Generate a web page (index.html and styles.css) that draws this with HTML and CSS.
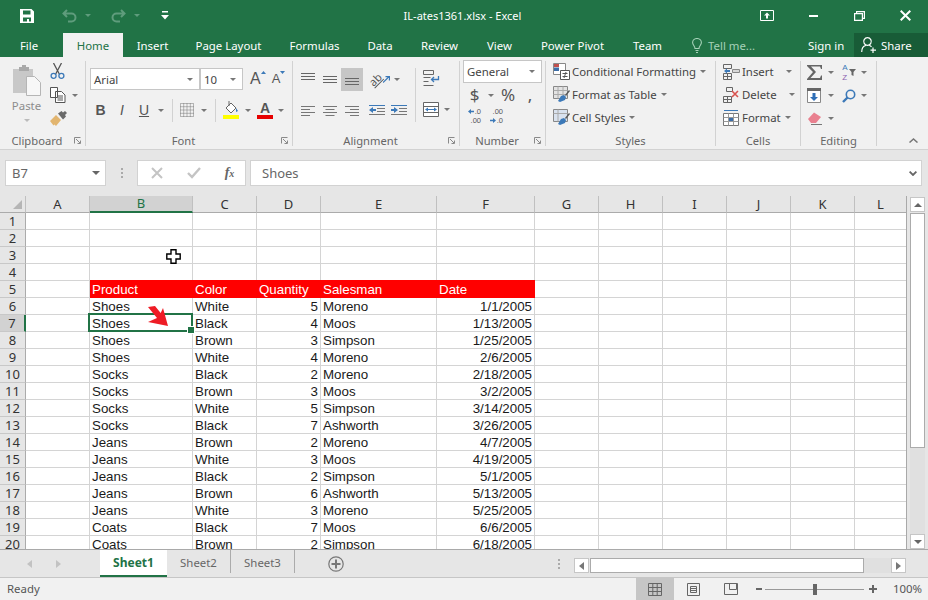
FILE: index.html
```html
<!DOCTYPE html>
<html lang="en">
  <head>
    <meta charset="UTF-8" />
    <title>IL-ates1361.xlsx - Excel</title>
    <link rel="stylesheet" href="styles.css">
  </head>
  <body>
    <!-- Title bar -->
    <div class="titlebar">
      <div class="qat">
        <svg class="q-save" width="14" height="14" viewBox="0 0 14 14"><path fill="#fff" fill-rule="evenodd" d="M0 0h11.5L14 2.500V14H0zM3 1.500V5.500h7.500V1.500zM3 8.500V12.500h8V8.500zM7 10h2v2.500H7z"/></svg>
        <svg class="q-undo" width="15" height="14" viewBox="0 0 15 14"><path fill="none" stroke="#5f9c7c" stroke-width="2" d="M5 1 1.500 4.500 5 8M2 4.500h7.500a4 4 0 0 1 0 8H6"/></svg>
        <i class="caret faded q-c1"></i>
        <svg class="q-redo" width="15" height="14" viewBox="0 0 15 14"><path fill="none" stroke="#5f9c7c" stroke-width="2" d="M10 1l3.500 3.500L10 8M13 4.500H5.500a4 4 0 0 0 0 8H9"/></svg>
        <i class="caret faded q-c2"></i>
        <svg class="q-more" width="8" height="9" viewBox="0 0 8 9"><path fill="#fff" d="M1 0h6v1.500H1zM0 4h8L4 8.500z"/></svg>
      </div>
      <div class="doc-title">IL-ates1361.xlsx - Excel</div>
      <div class="win-btns">
        <svg width="14" height="11" viewBox="0 0 14 11"><path fill="none" stroke="#fff" d="M.5.500h13v10H.5z"/><path fill="#fff" d="M7 2.500 10 5.500H8V8.500H6V5.500H4z"/></svg>
        <svg width="9" height="2" viewBox="0 0 9 2"><path fill="#fff" d="M0 0h9v2H0z"/></svg>
        <svg width="11" height="10" viewBox="0 0 11 10"><path fill="none" stroke="#fff" stroke-width="1.200" d="M.6 2.600h7.800v6.800H.6zM2.600 2.600V.6h7.800v6.800H8.400"/></svg>
        <svg width="11" height="11" viewBox="0 0 11 11"><path stroke="#fff" stroke-width="2" d="M.7.700l9.600 9.600M10.300.700.700 10.300"/></svg>
      </div>
    </div>

    <!-- Tabs -->
    <div class="tabs">
      <div class="tab-list">
        <div>File</div>
        <div class="tab-active">Home</div>
        <div>Insert</div>
        <div>Page Layout</div>
        <div>Formulas</div>
        <div>Data</div>
        <div>Review</div>
        <div>View</div>
        <div>Power Pivot</div>
        <div>Team</div>
      </div>
      <div class="tell-me">
        <svg width="10" height="15" viewBox="0 0 10 15"><path fill="none" stroke="#a6d1b8" stroke-width="1.100" d="M3 10.500C3 8 .6 7 .6 4.600a4.400 4.100 0 0 1 8.800 0C9.400 7 7 8 7 10.500zM3.500 12.500h3M4 14.500h2"/></svg>
        <span>Tell me...</span>
      </div>
      <div class="sign-in">Sign in</div>
      <div class="share">
        <svg width="16" height="16" viewBox="0 0 16 16"><path fill="none" stroke="#fff" stroke-width="1.200" d="M6.500.7a3.800 3.800 0 1 1-.01 0zM.7 15c0-3.500 2-6 4-6.500M8.500 8.500c.8.200 1.500.7 2 1.300M12 10.500V16M9.500 13.200h5.500"/></svg>
        <span>Share</span>
      </div>
    </div>

    <!-- Ribbon -->
    <div class="ribbon">
      <div class="group g-clipboard">
        <div class="group-body clip-body">
          <div class="paste">
            <svg width="29" height="31" viewBox="0 0 29 31"><path fill="#c8c8c8" d="M1 4h20v24H1z"/><path fill="#a9a9a9" d="M7 2h3V0h4v2h3v4H7z"/><path fill="#f7f7f7" stroke="#b5b5b5" d="M14.500 11.500h8l6 6v13h-14z"/></svg>
            <span>Paste</span>
            <i class="caret light"></i>
          </div>
          <div class="clip-tools">
            <svg width="15" height="16" viewBox="0 0 15 16"><path fill="none" stroke="#555" stroke-width="1.300" d="M3.500 0l5.800 11M11.500 0 5.700 11"/><circle cx="3.600" cy="12.800" r="2.500" fill="none" stroke="#3c79b8" stroke-width="1.300"/><circle cx="11.400" cy="12.800" r="2.500" fill="none" stroke="#3c79b8" stroke-width="1.300"/></svg>
            <div class="clip-copy">
              <svg width="16" height="16" viewBox="0 0 16 16"><path fill="#fff" stroke="#555" d="M.5.500h7v10h-7zM5.500 4.500h6l3.500 3.500v7.500H5.500z"/><path stroke="#555" d="M7.500 9h5.500M7.500 11h5.500M7.500 13h5.500"/></svg>
              <i class="caret"></i>
            </div>
            <svg width="17" height="15" viewBox="0 0 17 15"><path fill="#e2b56f" d="M0 10l6-6 5 5-5 6-1.500-1.500-1 1z"/><path fill="#6a6a6a" d="M8 2.500 11.500 0l1.500 1.500L15 0l2 2-2 2 1 1.500-3 3z"/></svg>
          </div>
        </div>
        <div class="group-label lab-launch"><span>Clipboard</span><svg class="launcher" width="7" height="7" viewBox="0 0 7 7"><path fill="none" stroke="#8a8a8a" d="M.5 6.500v-6h6M2 2l4 4M3.500 6.500h3v-3"/></svg></div>
      </div>

      <div class="group g-font">
        <div class="group-body font-body">
          <div class="font-row-1">
            <div class="select font-name"><span>Arial</span><i class="caret"></i></div>
            <div class="select font-size"><span>10</span><i class="caret"></i></div>
            <div class="size-btn grow-a"><span>A</span><svg width="5" height="3" viewBox="0 0 5 3"><path fill="#3c79b8" d="M0 3 2.500 0 5 3z"/></svg></div>
            <div class="size-btn shrink-a"><span>A</span><svg width="5" height="3" viewBox="0 0 5 3"><path fill="#3c79b8" d="M0 0h5L2.500 3z"/></svg></div>
          </div>
          <div class="font-row-2">
            <b class="fmt">B</b>
            <i class="fmt">I</i>
            <u class="fmt">U</u>
            <i class="caret"></i>
            <span class="mini-sep"></span>
            <svg width="14" height="14" viewBox="0 0 14 14"><path fill="none" stroke="#777" stroke-dasharray="1 1" d="M.5.500h13v13H.5zM7 .5v13M.5 7h13M3.700.5v13M10.300.5v13M.5 3.700h13M.5 10.300h13"/></svg>
            <i class="caret"></i>
            <span class="mini-sep"></span>
            <svg width="16" height="18" viewBox="0 0 16 18"><path fill="#fff" stroke="#666" d="M3 7l5-5 5 5-5 5z"/><path stroke="#666" d="M6 0v5"/><path fill="#3c79b8" d="M13 7l2 3-2 1z"/><path fill="#ffff00" d="M0 14h16v4H0z"/></svg>
            <i class="caret"></i>
            <div class="color-btn"><span>A</span></div>
            <i class="caret"></i>
          </div>
        </div>
        <div class="group-label lab-launch"><span>Font</span><svg class="launcher" width="7" height="7" viewBox="0 0 7 7"><path fill="none" stroke="#8a8a8a" d="M.5 6.500v-6h6M2 2l4 4M3.500 6.500h3v-3"/></svg></div>
      </div>

      <div class="group g-align">
        <div class="group-body align-body">
          <div class="align-main">
            <div class="align-cell"><svg width="14" height="8" viewBox="0 0 14 8"><path stroke="#666" d="M0 .5h14M0 3.500h14M0 6.500h14"/></svg></div>
            <div class="align-cell"><svg width="14" height="8" viewBox="0 0 14 8"><path stroke="#666" d="M0 .5h14M0 3.500h14M0 6.500h14"/></svg></div>
            <div class="align-cell align-on"><svg width="14" height="8" viewBox="0 0 14 8"><path stroke="#666" d="M0 .5h14M0 3.500h14M0 6.500h14"/></svg></div>
            <div class="align-wide">
              <span class="orient">ab</span>
              <svg class="orient-arrow" width="7" height="7" viewBox="0 0 7 7"><path fill="none" stroke="#3c79b8" stroke-width="1.200" d="M0 6.500 6 .8M2.500.6h3.900v3.900"/></svg>
              <i class="caret"></i>
            </div>
            <div class="align-cell"><svg width="14" height="10" viewBox="0 0 14 10"><path stroke="#777" d="M0 .5h14M0 3.500h9M0 6.500h14M0 9.500h9"/></svg></div>
            <div class="align-cell"><svg width="14" height="10" viewBox="0 0 14 10"><path stroke="#777" d="M0 .5h14M2.500 3.500h9M0 6.500h14M2.500 9.500h9"/></svg></div>
            <div class="align-cell"><svg width="14" height="10" viewBox="0 0 14 10"><path stroke="#777" d="M0 .5h14M5 3.500h9M0 6.500h14M5 9.500h9"/></svg></div>
            <div class="align-wide indents">
              <svg width="16" height="11" viewBox="0 0 16 11"><path stroke="#777" d="M8 3.500h8M8 6.500h8M0 9.500h16"/><path stroke="#3c79b8" d="M0 .5h16"/><path fill="#3c79b8" d="M0 5l4-3v2h3v2H4v2z"/></svg>
              <svg width="16" height="11" viewBox="0 0 16 11"><path stroke="#777" d="M8 3.500h8M8 6.500h8M0 9.500h16"/><path stroke="#3c79b8" d="M0 .5h16"/><path fill="#3c79b8" d="M7 5 3 2v2H0v2h3v2z"/></svg>
            </div>
          </div>
          <div class="side-sep"></div>
          <div class="align-side">
            <svg width="17" height="16" viewBox="0 0 17 16"><path fill="none" stroke="#666" d="M.5.500h10v4H.5zM.5 7.500h7M.5 11.500h5M.5 15.500h10"/><path fill="none" stroke="#3c79b8" stroke-width="1.300" d="M15.500 6v3.500h-7M11 7l-2.500 2.500L11 12"/></svg>
            <div class="merge">
              <svg width="16" height="15" viewBox="0 0 16 15"><path fill="#fff" stroke="#666" d="M.5.500h15v14H.5z"/><path stroke="#666" d="M.5 4.500h15M.5 10.500h15"/><path stroke="#3c79b8" d="M3 7.500h10"/><path fill="#3c79b8" d="M2 7.500 5 5.500v4zM14 7.500 11 5.500v4z"/></svg>
              <i class="caret"></i>
            </div>
          </div>
        </div>
        <div class="group-label lab-launch"><span>Alignment</span><svg class="launcher" width="7" height="7" viewBox="0 0 7 7"><path fill="none" stroke="#8a8a8a" d="M.5 6.500v-6h6M2 2l4 4M3.500 6.500h3v-3"/></svg></div>
      </div>

      <div class="group g-number">
        <div class="group-body number-body">
          <div class="select num-format"><span>General</span><i class="caret"></i></div>
          <div class="num-row-2">
            <span class="num-sym">$</span>
            <i class="caret"></i>
            <span class="num-sym pct">%</span>
            <span class="num-sym comma">,</span>
          </div>
          <div class="num-row-3">
            <div class="dec">
              <div class="dec-line"><svg width="6" height="5" viewBox="0 0 6 5"><path fill="#3c79b8" d="M0 2.500 3 0v1.800h3v1.400H3V5z"/></svg><span>.0</span></div>
              <div class="dec-line"><span>.00</span></div>
            </div>
            <div class="dec">
              <div class="dec-line"><span>.00</span></div>
              <div class="dec-line"><svg width="6" height="5" viewBox="0 0 6 5"><path fill="#3c79b8" d="M6 2.500 3 0v1.800H0v1.400h3V5z"/></svg><span>.0</span></div>
            </div>
          </div>
        </div>
        <div class="group-label lab-launch"><span>Number</span><svg class="launcher" width="7" height="7" viewBox="0 0 7 7"><path fill="none" stroke="#8a8a8a" d="M.5 6.500v-6h6M2 2l4 4M3.500 6.500h3v-3"/></svg></div>
      </div>

      <div class="group g-styles">
        <div class="group-body list-body">
          <div class="list-row">
            <svg width="17" height="17" viewBox="0 0 17 17"><path fill="#fff" stroke="#888" d="M.5.500h12v11H.5z"/><path fill="#c0504d" d="M1 1h5v3H1z"/><path fill="#3c6ea8" d="M1 4.500h5V8H1z"/><path fill="#fff" stroke="#555" d="M7.500 7.500h9v9h-9z"/><path stroke="#555" d="M9.500 10.500h5M9.500 13.500h5M13 9l-2 6"/></svg>
            <span>Conditional Formatting</span><i class="caret"></i>
          </div>
          <div class="list-row">
            <svg width="17" height="17" viewBox="0 0 17 17"><path fill="#e3e3e3" stroke="#888" d="M.5.500h14v12H.5z"/><path stroke="#aaa" d="M.5 4.500h14M.5 8.500h14M5 .5v12M10 .5v12"/><path fill="#3c79b8" d="M5 15l3-5 3-1 2 2-1 3-5 2z"/><path fill="#555" d="M12 9l4-5 1 1-4 5z"/></svg>
            <span>Format as Table</span><i class="caret"></i>
          </div>
          <div class="list-row">
            <svg width="17" height="17" viewBox="0 0 17 17"><path fill="#d9e2ee" stroke="#888" d="M.5.500h14v12H.5z"/><path stroke="#aaa" d="M.5 4.500h14M5 .5v12"/><path fill="#3c79b8" d="M5 15l3-5 3-1 2 2-1 3-5 2z"/><path fill="#555" d="M12 9l4-5 1 1-4 5z"/></svg>
            <span>Cell Styles</span><i class="caret"></i>
          </div>
        </div>
        <div class="group-label">Styles</div>
      </div>

      <div class="group g-cells">
        <div class="group-body list-body">
          <div class="list-row">
            <svg width="17" height="16" viewBox="0 0 17 16"><path fill="none" stroke="#666" d="M.5.500h8v4h-8zM.5 9.500h8v6h-8zM4.500 9.500v6M.5 12.500h8"/><path fill="#3c79b8" d="M1 7 4 4.500v1.500h3v2H4v1.500z"/><path fill="#d8d8d8" stroke="#888" d="M9.500 5.500h7v3h-7z"/></svg>
            <span>Insert</span><i class="caret far"></i>
          </div>
          <div class="list-row">
            <svg width="17" height="16" viewBox="0 0 17 16"><path fill="none" stroke="#666" d="M.5 9.500h8v6h-8zM4.500 9.500v6M.5 12.500h8M3.500.5h6v4h-6z"/><path stroke="#d9534f" stroke-width="1.600" d="M9 4l6 6M15 4l-6 6"/></svg>
            <span>Delete</span><i class="caret far"></i>
          </div>
          <div class="list-row">
            <svg width="17" height="17" viewBox="0 0 17 17"><path fill="#fff" stroke="#777" d="M.5 4.500h15v12H.5z"/><path stroke="#999" d="M5.500 4.500v12M10.500 4.500v12M.5 8.500h15M.5 12.500h15"/><path fill="#3c6ea8" d="M6 9h4v3H6z"/><path stroke="#3c79b8" d="M1 1.500h14"/></svg>
            <span>Format</span><i class="caret"></i>
          </div>
        </div>
        <div class="group-label">Cells</div>
      </div>

      <div class="group g-editing">
        <div class="group-body edit-body">
          <svg width="15" height="15" viewBox="0 0 15 15"><path fill="#666" d="M0 0h15v4h-1l-1-2.500H4L9 7l-5.500 6H13l1-2.500h1V15H0v-1l6-7-6-6z"/></svg>
          <i class="caret"></i>
          <div class="sort-btn">
            <div class="az"><span class="az-a">A</span><span class="az-z">Z</span></div>
            <svg width="7" height="7" viewBox="0 0 7 7"><path fill="#666" d="M0 0h7L4.500 3v4l-2-1V3z"/></svg>
          </div>
          <i class="caret"></i>
          <svg width="15" height="15" viewBox="0 0 15 15"><path fill="#fff" stroke="#888" d="M.5 2.500h13v12H.5z"/><path fill="#666" d="M0 0h14v3H0z"/><path fill="#2f6fb7" d="M5.500 5h3v4H11l-4 4-4-4h2.500z"/></svg>
          <i class="caret"></i>
          <svg width="14" height="14" viewBox="0 0 14 14"><circle cx="8.500" cy="5.500" r="4.200" fill="none" stroke="#3c79b8" stroke-width="1.600"/><path stroke="#3c79b8" stroke-width="2.400" d="M5.500 8.500l-4.500 4.500"/></svg>
          <i class="caret"></i>
          <svg width="14" height="13" viewBox="0 0 14 13"><path fill="#e9808f" d="M0 7l6-6.500 7 4.500-5 6H3z"/><path stroke="#777" d="M3 12.500h11"/></svg>
          <i class="caret"></i>
        </div>
        <div class="group-label">Editing</div>
      </div>

      <div class="ribbon-end">
        <svg width="9" height="5" viewBox="0 0 9 5"><path fill="none" stroke="#777" stroke-width="1.500" d="M.5 4.500l4-3.500 4 3.500"/></svg>
      </div>
    </div>

    <!-- Formula bar -->
    <div class="formula-strip">
      <div class="fbox name-box"><span>B7</span><i class="caret dark"></i></div>
      <div class="dots"></div>
      <div class="fbox fx-box">
        <svg width="12" height="12" viewBox="0 0 12 12"><path stroke="#c4c4c4" stroke-width="2" d="M1 1l10 10M11 1 1 11"/></svg>
        <svg width="14" height="12" viewBox="0 0 14 12"><path fill="none" stroke="#c4c4c4" stroke-width="2.400" d="M1 6l4 4 8-9"/></svg>
        <span class="fx">f<small>x</small></span>
      </div>
      <div class="fbox formula-input"><span>Shoes</span>
        <svg width="8" height="5" viewBox="0 0 8 5"><path fill="none" stroke="#666" stroke-width="1.800" d="M.6.600 4 4 7.400.6"/></svg>
      </div>
    </div>

    <!-- Sheet -->
    <div class="sheet">
      <div class="grid-wrap">
        <table class="grid">
          <colgroup><col class="c-row"><col class="c-std"><col class="c-b"><col class="c-std"><col class="c-std"><col class="c-e"><col class="c-f"><col class="c-std"><col class="c-std"><col class="c-std"><col class="c-std"><col class="c-std"><col class="c-l"></colgroup>
          <tr class="col-heads"><th class="corner"><span class="corner-tri"></span></th><th>A</th><th class="sel">B</th><th>C</th><th>D</th><th>E</th><th>F</th><th>G</th><th>H</th><th>I</th><th>J</th><th>K</th><th>L</th></tr>
          <tr><th>1</th><td></td><td></td><td></td><td></td><td></td><td></td><td></td><td></td><td></td><td></td><td></td><td></td></tr>
          <tr><th>2</th><td></td><td></td><td></td><td></td><td></td><td></td><td></td><td></td><td></td><td></td><td></td><td></td></tr>
          <tr><th>3</th><td></td><td></td><td></td><td></td><td></td><td></td><td></td><td></td><td></td><td></td><td></td><td></td></tr>
          <tr><th>4</th><td></td><td></td><td></td><td></td><td></td><td></td><td></td><td></td><td></td><td></td><td></td><td></td></tr>
          <tr class="head-row"><th>5</th><td></td><td class="red">Product</td><td class="red">Color</td><td class="red">Quantity</td><td class="red">Salesman</td><td class="red">Date</td><td></td><td></td><td></td><td></td><td></td><td></td></tr>
          <tr><th>6</th><td></td><td>Shoes</td><td>White</td><td class="num">5</td><td>Moreno</td><td class="num">1/1/2005</td><td></td><td></td><td></td><td></td><td></td><td></td></tr>
          <tr><th class="sel-row">7</th><td></td><td>Shoes</td><td>Black</td><td class="num">4</td><td>Moos</td><td class="num">1/13/2005</td><td></td><td></td><td></td><td></td><td></td><td></td></tr>
          <tr><th>8</th><td></td><td>Shoes</td><td>Brown</td><td class="num">3</td><td>Simpson</td><td class="num">1/25/2005</td><td></td><td></td><td></td><td></td><td></td><td></td></tr>
          <tr><th>9</th><td></td><td>Shoes</td><td>White</td><td class="num">4</td><td>Moreno</td><td class="num">2/6/2005</td><td></td><td></td><td></td><td></td><td></td><td></td></tr>
          <tr><th>10</th><td></td><td>Socks</td><td>Black</td><td class="num">2</td><td>Moreno</td><td class="num">2/18/2005</td><td></td><td></td><td></td><td></td><td></td><td></td></tr>
          <tr><th>11</th><td></td><td>Socks</td><td>Brown</td><td class="num">3</td><td>Moos</td><td class="num">3/2/2005</td><td></td><td></td><td></td><td></td><td></td><td></td></tr>
          <tr><th>12</th><td></td><td>Socks</td><td>White</td><td class="num">5</td><td>Simpson</td><td class="num">3/14/2005</td><td></td><td></td><td></td><td></td><td></td><td></td></tr>
          <tr><th>13</th><td></td><td>Socks</td><td>Black</td><td class="num">7</td><td>Ashworth</td><td class="num">3/26/2005</td><td></td><td></td><td></td><td></td><td></td><td></td></tr>
          <tr><th>14</th><td></td><td>Jeans</td><td>Brown</td><td class="num">2</td><td>Moreno</td><td class="num">4/7/2005</td><td></td><td></td><td></td><td></td><td></td><td></td></tr>
          <tr><th>15</th><td></td><td>Jeans</td><td>White</td><td class="num">3</td><td>Moos</td><td class="num">4/19/2005</td><td></td><td></td><td></td><td></td><td></td><td></td></tr>
          <tr><th>16</th><td></td><td>Jeans</td><td>Black</td><td class="num">2</td><td>Simpson</td><td class="num">5/1/2005</td><td></td><td></td><td></td><td></td><td></td><td></td></tr>
          <tr><th>17</th><td></td><td>Jeans</td><td>Brown</td><td class="num">6</td><td>Ashworth</td><td class="num">5/13/2005</td><td></td><td></td><td></td><td></td><td></td><td></td></tr>
          <tr><th>18</th><td></td><td>Jeans</td><td>White</td><td class="num">3</td><td>Moreno</td><td class="num">5/25/2005</td><td></td><td></td><td></td><td></td><td></td><td></td></tr>
          <tr><th>19</th><td></td><td>Coats</td><td>Black</td><td class="num">7</td><td>Moos</td><td class="num">6/6/2005</td><td></td><td></td><td></td><td></td><td></td><td></td></tr>
          <tr><th>20</th><td></td><td>Coats</td><td>Brown</td><td class="num">2</td><td>Simpson</td><td class="num">6/18/2005</td><td></td><td></td><td></td><td></td><td></td><td></td></tr>
        </table>
        <!-- Overlays on the grid -->
        <div class="cell-cursor"><span class="fill-handle"></span></div>
        <svg class="red-arrow" width="22" height="22" viewBox="0 0 22 22"><path fill="#ee1c25" d="M1 2 8 1 13.700 8 16 3 21 21 1 17 10 13z"/></svg>
        <svg class="mouse-cross" width="15" height="15" viewBox="0 0 15 15"><path fill="#fff" stroke="#000" stroke-width="1.400" d="M5 .8h5V5h4.200v5H10v4.200H5V10H.8V5H5z"/></svg>
      </div>
      <div class="vscroll">
        <div class="sb-btn"><i class="caret up"></i></div>
        <div class="sb-thumb"></div>
        <div class="sb-track"></div>
        <div class="sb-btn"><i class="caret dark"></i></div>
      </div>
    </div>

    <!-- Sheet tabs -->
    <div class="sheet-bar">
      <div class="sheet-nav">
        <i class="tri-left"></i>
        <i class="tri-right"></i>
      </div>
      <div class="sheet-tab sheet-on">Sheet1</div>
      <div class="sheet-tab">Sheet2</div>
      <div class="sheet-tab">Sheet3</div>
      <svg class="add-sheet" width="16" height="16" viewBox="0 0 16 16"><circle cx="8" cy="8" r="7.200" fill="none" stroke="#777" stroke-width="1.200"/><path stroke="#777" stroke-width="2" d="M8 3.500v9M3.500 8h9"/></svg>
      <div class="dots bar-dots"></div>
      <div class="hscroll">
        <div class="sb-btn"><i class="tri-left dark"></i></div>
        <div class="sb-thumb"></div>
        <div class="sb-track"></div>
        <div class="sb-btn"><i class="tri-right dark"></i></div>
      </div>
    </div>

    <!-- Status bar -->
    <div class="status">
      <span class="ready">Ready</span>
      <div class="view-btn view-on"><svg width="14" height="13" viewBox="0 0 14 13"><path fill="none" stroke="#666" d="M.5.500h13v12H.5zM.5 4.500h13M.5 8.500h13M4.800.5v12M9.200.5v12"/></svg></div>
      <div class="view-btn"><svg width="13" height="13" viewBox="0 0 13 13"><path fill="none" stroke="#666" d="M.5.500h12v12H.5zM3.500 3.500h6v6h-6zM3.500 5.500h6M3.500 7.500h6"/></svg></div>
      <div class="view-btn"><svg width="14" height="12" viewBox="0 0 14 12"><path fill="none" stroke="#666" d="M.5.500h13v11H.5zM5.500.5v6h7v-6"/></svg></div>
      <div class="zoom">
        <span class="zoom-minus"></span>
        <div class="zoom-track"><span class="zoom-thumb"></span></div>
        <span class="zoom-plus"></span>
      </div>
      <span class="zoom-val">100%</span>
    </div>
  </body>
</html>
```

FILE: styles.css
```css
* {
  box-sizing: border-box;
}

body {
  margin: 0;
  width: 928px;
  height: 600px;
  overflow: hidden;
  background: #e6e6e6;
  font-family: "Noto Sans", sans-serif;
  font-size: 11.400px;
  color: #444;
}

svg {
  display: block;
  flex: none;
}

i.caret {
  display: block;
  flex: none;
  width: 0;
  height: 0;
  border-left: 3px solid transparent;
  border-right: 3px solid transparent;
  border-top: 3px solid #777;
}

.caret.faded {
  border-top-color: #5f9c7c;
}

.caret.light {
  border-top-color: #bbb;
}

.caret.dark {
  border-left-width: 4px;
  border-right-width: 4px;
  border-top: 4px solid #666;
}

.caret.up {
  border-left-width: 4px;
  border-right-width: 4px;
  border-top: 0;
  border-bottom: 4px solid #666;
}

/* title bar */
.titlebar {
  height: 33px;
  padding-bottom: 2px;
  background: #217346;
  color: #fff;
  display: flex;
  align-items: center;
}

.qat {
  width: 340px;
  display: flex;
  align-items: center;
  padding-left: 20px;
  flex: none;
}

.q-undo {
  margin-left: 28px;
}

.q-c1 {
  margin-left: 8px;
}

.q-redo {
  margin-left: 20px;
}

.q-c2 {
  margin-left: 8px;
}

.q-more {
  margin-left: 21px;
}

.doc-title {
  flex: none;
  width: 245px;
  text-align: center;
  font-size: 11px;
}

.win-btns {
  flex: 1;
  display: grid;
  grid-template-columns: 46px 46px 46px 46px;
  justify-content: end;
  justify-items: center;
  align-items: center;
}

/* tabs */
.tabs {
  height: 24px;
  background: #217346;
  color: #fff;
  display: flex;
  align-items: stretch;
}

.tab-list {
  display: grid;
  grid-template-columns: 58px 65px 59px 93px 79px 52px 67px 53px 93px 57px;
  flex: none;
  width: 676px;
}

.tab-list div {
  text-align: center;
  line-height: 25px;
  white-space: nowrap;
}

.tab-list .tab-active {
  background: #f1f1f1;
  color: #217346;
  margin-left: 5px;
}

.tell-me {
  flex: none;
  width: 124px;
  display: flex;
  align-items: center;
  gap: 6px;
  padding-left: 16px;
  color: #a6d1b8;
}

.sign-in {
  flex: none;
  width: 54px;
  padding-left: 8px;
  line-height: 25px;
}

.share {
  flex: none;
  width: 74px;
  background: #185c37;
  display: flex;
  align-items: center;
  gap: 4px;
  padding-left: 7px;
}

/* ribbon */
.ribbon {
  height: 93px;
  background: #f1f1f1;
  border-bottom: 1px solid #d2d2d2;
  display: flex;
  padding-top: 4px;
}

.group {
  height: 85px;
  border-right: 1px solid #d2d2d2;
  display: flex;
  flex-direction: column;
  flex: none;
}

.group-body {
  flex: 1;
  min-height: 0;
}

.group-label {
  height: 14px;
  line-height: 14px;
  margin-bottom: -2px;
  text-align: center;
  color: #666;
  font-size: 11.200px;
}

.lab-launch {
  display: flex;
  align-items: center;
  padding-right: 4px;
}

.lab-launch span {
  flex: 1;
}

.launcher {
  margin-top: -1px;
}

.g-clipboard {
  width: 86px;
}

.g-font {
  width: 207px;
}

.g-align {
  width: 167px;
}

.g-number {
  width: 86px;
}

.g-styles {
  width: 170px;
}

.g-cells {
  width: 85px;
}

.g-editing {
  width: 76px;
}

.ribbon-end {
  flex: 1;
  display: flex;
  justify-content: flex-end;
  align-items: flex-end;
  padding: 0 10px 6px 0;
}

/* clipboard */
.clip-body {
  display: flex;
  padding-left: 12px;
}

.paste {
  width: 29px;
  display: flex;
  flex-direction: column;
  align-items: center;
  padding-top: 4px;
  color: #8c8c8c;
}

.paste span {
  margin-top: 2px;
  line-height: 16px;
}

.paste .caret {
  margin-top: 5px;
}

.clip-tools {
  margin-left: 9px;
  padding-top: 2px;
  display: flex;
  flex-direction: column;
  gap: 8px;
}

.clip-copy {
  display: flex;
  align-items: center;
  gap: 6px;
}

/* boxes with drop downs */
.select {
  background: #fff;
  border: 1px solid #c6c6c6;
  display: flex;
  align-items: center;
  justify-content: space-between;
  padding: 0 6px 0 3px;
  height: 22px;
}

/* font */
.font-body {
  padding: 7px 0 0 4px;
}

.font-row-1 {
  display: flex;
  align-items: center;
}

.font-name {
  width: 111px;
  border-right-width: 2px;
}

.font-size {
  width: 42px;
  border-left: 0;
}

.size-btn {
  display: flex;
  align-items: flex-start;
  font-family: "Liberation Sans", sans-serif;
  color: #555;
  line-height: 18px;
}

.grow-a {
  margin-left: 7px;
  font-size: 16px;
}

.shrink-a {
  margin-left: 6px;
  font-size: 13px;
}

.size-btn svg {
  margin-top: 1px;
}

.font-row-2 {
  display: grid;
  grid-template-columns: 21px 22px 22px 12px 10px 20px 14px 8px 24px 10px 24px 8px;
  justify-items: center;
  align-items: center;
  height: 24px;
  margin-top: 8px;
}

.fmt {
  font-family: "Liberation Sans", sans-serif;
  font-size: 14px;
  color: #555;
}

.color-btn {
  width: 16px;
  height: 18px;
  border-bottom: 4px solid #e60000;
  text-align: center;
  font-family: "Liberation Sans", sans-serif;
  font-size: 14px;
  font-weight: bold;
  line-height: 14px;
  color: #555;
}

.mini-sep {
  width: 1px;
  height: 23px;
  background: #d2d2d2;
}

/* alignment */
.align-body {
  display: flex;
  padding: 7px 0 0 4px;
}

.align-main {
  display: grid;
  grid-template-columns: 22px 22px 22px 52px;
  grid-template-rows: 23px 23px;
  row-gap: 8px;
  width: 118px;
}

.align-cell {
  display: flex;
  align-items: center;
  justify-content: center;
}

.align-on {
  background: #c6c6c6;
  align-items: flex-end;
  padding-bottom: 5px;
}

.align-main .align-cell:nth-child(1) {
  align-items: flex-start;
  padding-top: 5px;
}

.align-wide {
  display: flex;
  align-items: center;
  gap: 4px;
  padding-left: 6px;
}

.orient {
  display: block;
  width: 12px;
  text-align: center;
  font-size: 11px;
  line-height: 12px;
  color: #555;
  text-decoration: underline;
  transform: rotate(-45deg);
}

.orient-arrow {
  margin-left: -2px;
}

.indents {
  gap: 6px;
}

.side-sep {
  width: 1px;
  height: 54px;
  background: #d2d2d2;
}

.align-side {
  padding: 2px 0 0 7px;
  display: flex;
  flex-direction: column;
  gap: 16px;
}

.merge {
  display: flex;
  align-items: center;
  gap: 5px;
}

/* number */
.number-body {
  padding: 0 0 0 3px;
  margin-top: -1px;
}

.num-format {
  width: 79px;
  height: 23px;
  padding: 0 6px 0 3px;
}

.num-row-2 {
  display: grid;
  grid-template-columns: 23px 10px 24px 20px;
  align-items: center;
  justify-items: center;
  height: 22px;
  margin-top: 1px;
}

.num-sym {
  font-size: 17px;
  line-height: 22px;
  color: #555;
}

.num-row-3 {
  display: flex;
  gap: 7px;
  padding: 1px 0 0 3px;
}

.dec {
  width: 15px;
  font-family: "Liberation Sans", sans-serif;
  font-size: 7.500px;
  line-height: 9px;
  color: #555;
}

.dec-line {
  display: flex;
  align-items: center;
  justify-content: flex-end;
  gap: 1px;
}

/* styles, cells */
.list-body {
  display: flex;
  flex-direction: column;
  margin-top: -1px;
  padding: 0 0 0 7px;
}

.list-row {
  height: 23px;
  display: flex;
  align-items: center;
  gap: 2px;
  white-space: nowrap;
}

.list-row .caret {
  margin-left: 2px;
}

.list-row .caret.far {
  margin-left: 10px;
}

/* editing */
.edit-body {
  display: grid;
  grid-template-columns: 19px 14px 22px 8px;
  grid-template-rows: 23px 23px 23px;
  justify-items: center;
  align-items: center;
  padding-left: 4px;
}

.sort-btn {
  display: flex;
  align-items: center;
  gap: 1px;
}

.az {
  font-family: "Liberation Sans", sans-serif;
  font-size: 8px;
  line-height: 9.500px;
}

.az span {
  display: block;
}

.az-a {
  color: #3c79b8;
}

.az-z {
  color: #8a5fb0;
}

/* formula bar */
.formula-strip {
  height: 46px;
  display: flex;
  align-items: flex-start;
  padding: 10px 6px 0 5px;
  background: #e6e6e6;
}

.fbox {
  height: 26px;
  background: #fff;
  border: 1px solid #d2d2d2;
  display: flex;
  align-items: center;
  font-size: 13px;
  color: #666;
  flex: none;
}

.name-box {
  width: 101px;
  justify-content: space-between;
  padding: 0 5px 0 6px;
}

.dots {
  width: 2px;
  height: 11px;
  margin: 8px 14px 0 15px;
  background: repeating-linear-gradient(#aaa 0 2px, transparent 2px 4px);
  flex: none;
}

.fx-box {
  width: 109px;
  display: grid;
  grid-template-columns: 37px 37px 35px;
  justify-items: center;
}

.fx {
  font-family: "Liberation Serif", serif;
  font-style: italic;
  font-weight: bold;
  font-size: 14px;
  color: #666;
}

.fx small {
  font-size: 10px;
}

.formula-input {
  width: 672px;
  margin-left: 4px;
  justify-content: space-between;
  padding: 0 4px 0 11px;
}

/* sheet */
.sheet {
  height: 354px;
  display: flex;
  overflow: hidden;
  border-bottom: 1px solid #a9a9a9;
}

.grid-wrap {
  position: relative;
  width: 907px;
  height: 353px;
  overflow: hidden;
  background: #fff;
  border-right: 1px solid #a9a9a9;
  flex: none;
}

.grid {
  table-layout: fixed;
  border-collapse: separate;
  border-spacing: 0;
  width: 907px;
  font-family: "Liberation Sans", sans-serif;
  font-size: 13.330px;
  color: #1a1a1a;
}

.c-row {
  width: 26px;
}

.c-std {
  width: 64px;
}

.c-b {
  width: 103px;
}

.c-e {
  width: 116px;
}

.c-f {
  width: 98px;
}

.c-l {
  width: 52px;
}

.grid td,
.grid th {
  height: 17px;
  padding: 1px 2px 0;
  border-right: 1px solid #d4d4d4;
  border-bottom: 1px solid #d4d4d4;
  line-height: 15px;
  overflow: hidden;
  white-space: nowrap;
}

.grid th {
  background: #e6e6e6;
  font-weight: normal;
  text-align: center;
  color: #333;
  font-family: "Noto Sans", sans-serif;
  font-size: 13px;
  line-height: 16px;
  border-right-color: #ababab;
  border-bottom-color: #c8c8c8;
  padding: 0;
}

.col-heads th {
  border-bottom-color: #ababab;
  border-right-color: #c0c0c0;
}

.grid td.num {
  text-align: right;
}

.grid td.red {
  background: #ff0000;
  color: #fff;
  border-right-color: #ff0000;
  border-bottom-color: #ff0000;
  box-shadow: 0 -1px 0 #ff0000;
}

.grid th.sel {
  background: #d2d2d2;
  color: #217346;
  line-height: 15px;
  border-bottom: 2px solid #217346;
}

.grid th.sel-row {
  background: #d2d2d2;
  border-right: 2px solid #217346;
}

.corner {
  position: relative;
}

.corner-tri {
  position: absolute;
  right: 3px;
  bottom: 3px;
  width: 0;
  height: 0;
  border-left: 9px solid transparent;
  border-bottom: 9px solid #b5b5b5;
}

.cell-cursor {
  position: absolute;
  left: 88px;
  top: 117px;
  width: 105px;
  height: 19px;
  border: 2px solid #217346;
}

.fill-handle {
  position: absolute;
  right: -3px;
  bottom: -3px;
  width: 6px;
  height: 6px;
  background: #217346;
  border: 1px solid #fff;
  box-sizing: content-box;
  margin: -1px;
}

.red-arrow {
  position: absolute;
  left: 147px;
  top: 109px;
}

.mouse-cross {
  position: absolute;
  left: 166px;
  top: 53px;
}

.vscroll {
  flex: 1;
  display: flex;
  flex-direction: column;
  padding: 1px 3px 0;
  background: #e6e6e6;
}

.sb-btn {
  background: #fff;
  border: 1px solid #c6c6c6;
  display: flex;
  align-items: center;
  justify-content: center;
  flex: none;
}

.vscroll .sb-btn {
  height: 15px;
}

.sb-thumb {
  background: #fff;
  border: 1px solid #ababab;
  flex: none;
}

.vscroll .sb-thumb {
  height: 235px;
  margin-top: 1px;
}

.sb-track {
  flex: 1;
  background: #e0e0e0;
}

/* sheet tabs */
.sheet-bar {
  height: 28px;
  display: flex;
  align-items: stretch;
  background: #e6e6e6;
  border-bottom: 1px solid #c6c6c6;
}

.sheet-nav {
  width: 100px;
  display: flex;
  align-items: center;
  gap: 24px;
  padding-left: 27px;
  flex: none;
}

.tri-left,
.tri-right {
  display: block;
  width: 0;
  height: 0;
  border-top: 4px solid transparent;
  border-bottom: 4px solid transparent;
}

.tri-left {
  border-right: 5px solid #c2c2c2;
}

.tri-right {
  border-left: 5px solid #c2c2c2;
}

.tri-left.dark {
  border-right-color: #777;
}

.tri-right.dark {
  border-left-color: #777;
}

.sheet-tab {
  width: 64px;
  margin: 0 0 4px;
  border-right: 1px solid #ababab;
  text-align: center;
  line-height: 25px;
  color: #666;
  flex: none;
}

.sheet-on {
  width: 67px;
  margin: 0;
  background: #fff;
  border-right: 0;
  border-bottom: 2px solid #217346;
  color: #217346;
  font-weight: bold;
  font-size: 12px;
}

.add-sheet {
  margin: 6px 0 0 33px;
}

.bar-dots {
  margin: 9px 0 0 214px;
}

.hscroll {
  width: 332px;
  margin: 8px 0 0 14px;
  height: 15px;
  display: flex;
  flex: none;
}

.hscroll .sb-btn {
  width: 15px;
  height: 15px;
}

.hscroll .sb-thumb {
  width: 274px;
  margin-left: 1px;
}

/* status bar */
.status {
  height: 22px;
  background: #f1f1f1;
  display: flex;
  align-items: stretch;
}

.ready {
  width: 636px;
  padding-left: 7px;
  line-height: 22px;
  color: #555;
  flex: none;
}

.view-btn {
  width: 38px;
  display: flex;
  align-items: center;
  justify-content: center;
  flex: none;
}

.view-on {
  background: #c6c6c6;
}

.zoom {
  width: 143px;
  display: flex;
  align-items: center;
  padding-left: 6px;
  flex: none;
}

.zoom-minus {
  width: 6px;
  height: 2px;
  background: #666;
}

.zoom-track {
  position: relative;
  width: 99px;
  height: 1px;
  margin: 0 5px 0 3px;
  background: #999;
}

.zoom-thumb {
  position: absolute;
  left: 48px;
  top: -5px;
  width: 4px;
  height: 11px;
  background: #666;
}

.zoom-plus {
  width: 8px;
  height: 8px;
  background: linear-gradient(#666, #666) center/8px 2px no-repeat, linear-gradient(#666, #666) center/2px 8px no-repeat;
}

.zoom-val {
  line-height: 22px;
  color: #555;
}
```
